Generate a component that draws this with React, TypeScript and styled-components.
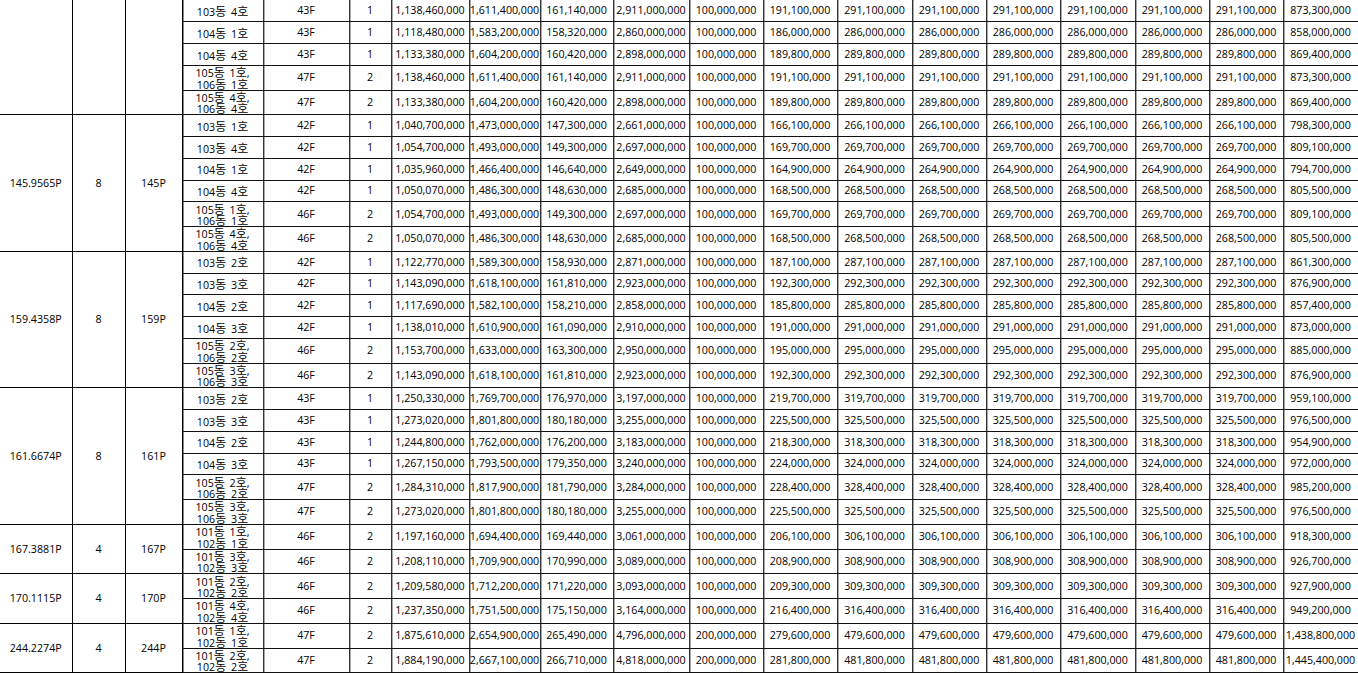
import React from 'react';
import styled, { createGlobalStyle } from 'styled-components';

const GlobalStyle = createGlobalStyle`
  html, body {
    margin: 0;
    padding: 0;
    background: #fff;
  }
  body {
    font-family: "Open Sans", "Noto Sans CJK KR", sans-serif;
    color: #000;
    overflow: hidden;
  }
`;

// column widths measured off the sheet
const COLS = [72, 53, 57, 81, 86, 42, 78, 71, 73, 76, 74, 74, 75, 74, 74, 75, 74, 74, 75];

const SINGLE_H = 21.75;
const DOUBLE_H = 24.75;

type Unit = [string, string]; // 동, 호
type Row = { units: Unit[]; floor: string; count: string; v: string[] };
type Group = { area?: string; households?: string; type?: string; rows: Row[] };

// v = [분양가A, 분양가B, 부가세, 합계, 계약금, 1차, 중도금(6회), 잔금]
const r = (units: Unit[], floor: string, count: string, v: string[]): Row => ({ units, floor, count, v });

const groups: Group[] = [
  {
    rows: [
      r([['103', '4']], '43F', '1', ['1,138,460,000', '1,611,400,000', '161,140,000', '2,911,000,000', '100,000,000', '191,100,000', '291,100,000', '873,300,000']),
      r([['104', '1']], '43F', '1', ['1,118,480,000', '1,583,200,000', '158,320,000', '2,860,000,000', '100,000,000', '186,000,000', '286,000,000', '858,000,000']),
      r([['104', '4']], '43F', '1', ['1,133,380,000', '1,604,200,000', '160,420,000', '2,898,000,000', '100,000,000', '189,800,000', '289,800,000', '869,400,000']),
      r([['105', '1'], ['106', '1']], '47F', '2', ['1,138,460,000', '1,611,400,000', '161,140,000', '2,911,000,000', '100,000,000', '191,100,000', '291,100,000', '873,300,000']),
      r([['105', '4'], ['106', '4']], '47F', '2', ['1,133,380,000', '1,604,200,000', '160,420,000', '2,898,000,000', '100,000,000', '189,800,000', '289,800,000', '869,400,000']),
    ],
  },
  {
    area: '145.9565P', households: '8', type: '145P',
    rows: [
      r([['103', '1']], '42F', '1', ['1,040,700,000', '1,473,000,000', '147,300,000', '2,661,000,000', '100,000,000', '166,100,000', '266,100,000', '798,300,000']),
      r([['103', '4']], '42F', '1', ['1,054,700,000', '1,493,000,000', '149,300,000', '2,697,000,000', '100,000,000', '169,700,000', '269,700,000', '809,100,000']),
      r([['104', '1']], '42F', '1', ['1,035,960,000', '1,466,400,000', '146,640,000', '2,649,000,000', '100,000,000', '164,900,000', '264,900,000', '794,700,000']),
      r([['104', '4']], '42F', '1', ['1,050,070,000', '1,486,300,000', '148,630,000', '2,685,000,000', '100,000,000', '168,500,000', '268,500,000', '805,500,000']),
      r([['105', '1'], ['106', '1']], '46F', '2', ['1,054,700,000', '1,493,000,000', '149,300,000', '2,697,000,000', '100,000,000', '169,700,000', '269,700,000', '809,100,000']),
      r([['105', '4'], ['106', '4']], '46F', '2', ['1,050,070,000', '1,486,300,000', '148,630,000', '2,685,000,000', '100,000,000', '168,500,000', '268,500,000', '805,500,000']),
    ],
  },
  {
    area: '159.4358P', households: '8', type: '159P',
    rows: [
      r([['103', '2']], '42F', '1', ['1,122,770,000', '1,589,300,000', '158,930,000', '2,871,000,000', '100,000,000', '187,100,000', '287,100,000', '861,300,000']),
      r([['103', '3']], '42F', '1', ['1,143,090,000', '1,618,100,000', '161,810,000', '2,923,000,000', '100,000,000', '192,300,000', '292,300,000', '876,900,000']),
      r([['104', '2']], '42F', '1', ['1,117,690,000', '1,582,100,000', '158,210,000', '2,858,000,000', '100,000,000', '185,800,000', '285,800,000', '857,400,000']),
      r([['104', '3']], '42F', '1', ['1,138,010,000', '1,610,900,000', '161,090,000', '2,910,000,000', '100,000,000', '191,000,000', '291,000,000', '873,000,000']),
      r([['105', '2'], ['106', '2']], '46F', '2', ['1,153,700,000', '1,633,000,000', '163,300,000', '2,950,000,000', '100,000,000', '195,000,000', '295,000,000', '885,000,000']),
      r([['105', '3'], ['106', '3']], '46F', '2', ['1,143,090,000', '1,618,100,000', '161,810,000', '2,923,000,000', '100,000,000', '192,300,000', '292,300,000', '876,900,000']),
    ],
  },
  {
    area: '161.6674P', households: '8', type: '161P',
    rows: [
      r([['103', '2']], '43F', '1', ['1,250,330,000', '1,769,700,000', '176,970,000', '3,197,000,000', '100,000,000', '219,700,000', '319,700,000', '959,100,000']),
      r([['103', '3']], '43F', '1', ['1,273,020,000', '1,801,800,000', '180,180,000', '3,255,000,000', '100,000,000', '225,500,000', '325,500,000', '976,500,000']),
      r([['104', '2']], '43F', '1', ['1,244,800,000', '1,762,000,000', '176,200,000', '3,183,000,000', '100,000,000', '218,300,000', '318,300,000', '954,900,000']),
      r([['104', '3']], '43F', '1', ['1,267,150,000', '1,793,500,000', '179,350,000', '3,240,000,000', '100,000,000', '224,000,000', '324,000,000', '972,000,000']),
      r([['105', '2'], ['106', '2']], '47F', '2', ['1,284,310,000', '1,817,900,000', '181,790,000', '3,284,000,000', '100,000,000', '228,400,000', '328,400,000', '985,200,000']),
      r([['105', '3'], ['106', '3']], '47F', '2', ['1,273,020,000', '1,801,800,000', '180,180,000', '3,255,000,000', '100,000,000', '225,500,000', '325,500,000', '976,500,000']),
    ],
  },
  {
    area: '167.3881P', households: '4', type: '167P',
    rows: [
      r([['101', '1'], ['102', '1']], '46F', '2', ['1,197,160,000', '1,694,400,000', '169,440,000', '3,061,000,000', '100,000,000', '206,100,000', '306,100,000', '918,300,000']),
      r([['101', '3'], ['102', '3']], '46F', '2', ['1,208,110,000', '1,709,900,000', '170,990,000', '3,089,000,000', '100,000,000', '208,900,000', '308,900,000', '926,700,000']),
    ],
  },
  {
    area: '170.1115P', households: '4', type: '170P',
    rows: [
      r([['101', '2'], ['102', '2']], '46F', '2', ['1,209,580,000', '1,712,200,000', '171,220,000', '3,093,000,000', '100,000,000', '209,300,000', '309,300,000', '927,900,000']),
      r([['101', '4'], ['102', '4']], '46F', '2', ['1,237,350,000', '1,751,500,000', '175,150,000', '3,164,000,000', '100,000,000', '216,400,000', '316,400,000', '949,200,000']),
    ],
  },
  {
    area: '244.2274P', households: '4', type: '244P',
    rows: [
      r([['101', '1'], ['102', '1']], '47F', '2', ['1,875,610,000', '2,654,900,000', '265,490,000', '4,796,000,000', '200,000,000', '279,600,000', '479,600,000', '1,438,800,000']),
      r([['101', '2'], ['102', '2']], '47F', '2', ['1,884,190,000', '2,667,100,000', '266,710,000', '4,818,000,000', '200,000,000', '281,800,000', '481,800,000', '1,445,400,000']),
    ],
  },
];

const Sheet = styled.table`
  border-collapse: collapse;
  table-layout: fixed;
  width: 1358px;
  font-size: 10.7px;
  line-height: 1.2;
`;

const Row = styled.tr<{ $h: number }>`
  height: ${p => p.$h}px;
`;

const GroupCell = styled.td<{ $first?: boolean }>`
  padding: 0;
  text-align: center;
  vertical-align: middle;
  white-space: nowrap;
  border-right: 1px solid #000;
  border-bottom: 1px solid #000;
  border-left: none;
  border-top: ${p => (p.$first ? 'none' : '1px solid #000')};
`;

const Cell = styled.td<{ $first?: boolean }>`
  padding: 0;
  text-align: center;
  vertical-align: middle;
  white-space: nowrap;
  overflow: visible;
  border-right: 1px solid #333;
  border-bottom: 1px solid #111;
  border-left: none;
  border-top: ${p => (p.$first ? 'none' : '1px solid #111')};
  box-shadow: inset 1px 0 0 #a8a8a8;
`;

const UnitCell = styled(Cell)`
  line-height: 11.4px;
  word-spacing: 2px;
  box-shadow: inset 1px 0 0 #8a8a8a;
`;

const Han = styled.span`
  font-family: "Noto Sans CJK KR", sans-serif;
  font-size: 12px;
`;

const UnitLine = styled.div`
  display: block;
  height: 11.4px;
`;

function UnitLabel({ units }: { units: Unit[] }) {
  return (
    <>
      {units.map(([dong, ho], i) => (
        <UnitLine key={i}>
          {dong}
          <Han>동</Han> {ho}
          <Han>호</Han>
          {i < units.length - 1 ? ',' : ''}
        </UnitLine>
      ))}
    </>
  );
}

export default function App() {
  return (
    <>
      <GlobalStyle />
      <Sheet>
        <colgroup>
          {COLS.map((w, i) => (
            <col key={i} style={{ width: w }} />
          ))}
        </colgroup>
        <tbody>
          {groups.map((g, gi) =>
            g.rows.map((row, ri) => {
              const first = gi === 0 && ri === 0;
              const values = [...row.v.slice(0, 7), ...Array(5).fill(row.v[6]), row.v[7]];
              return (
                <Row key={`${gi}-${ri}`} $h={row.units.length > 1 ? DOUBLE_H : SINGLE_H}>
                  {ri === 0 && (
                    <>
                      <GroupCell rowSpan={g.rows.length} $first={first}>{g.area}</GroupCell>
                      <GroupCell rowSpan={g.rows.length} $first={first}>{g.households}</GroupCell>
                      <GroupCell rowSpan={g.rows.length} $first={first}>{g.type}</GroupCell>
                    </>
                  )}
                  <UnitCell $first={first}>
                    <UnitLabel units={row.units} />
                  </UnitCell>
                  <Cell $first={first}>{row.floor}</Cell>
                  <Cell $first={first}>{row.count}</Cell>
                  {values.map((val, vi) => (
                    <Cell key={vi} $first={first}>{val}</Cell>
                  ))}
                </Row>
              );
            })
          )}
        </tbody>
      </Sheet>
    </>
  );
}
